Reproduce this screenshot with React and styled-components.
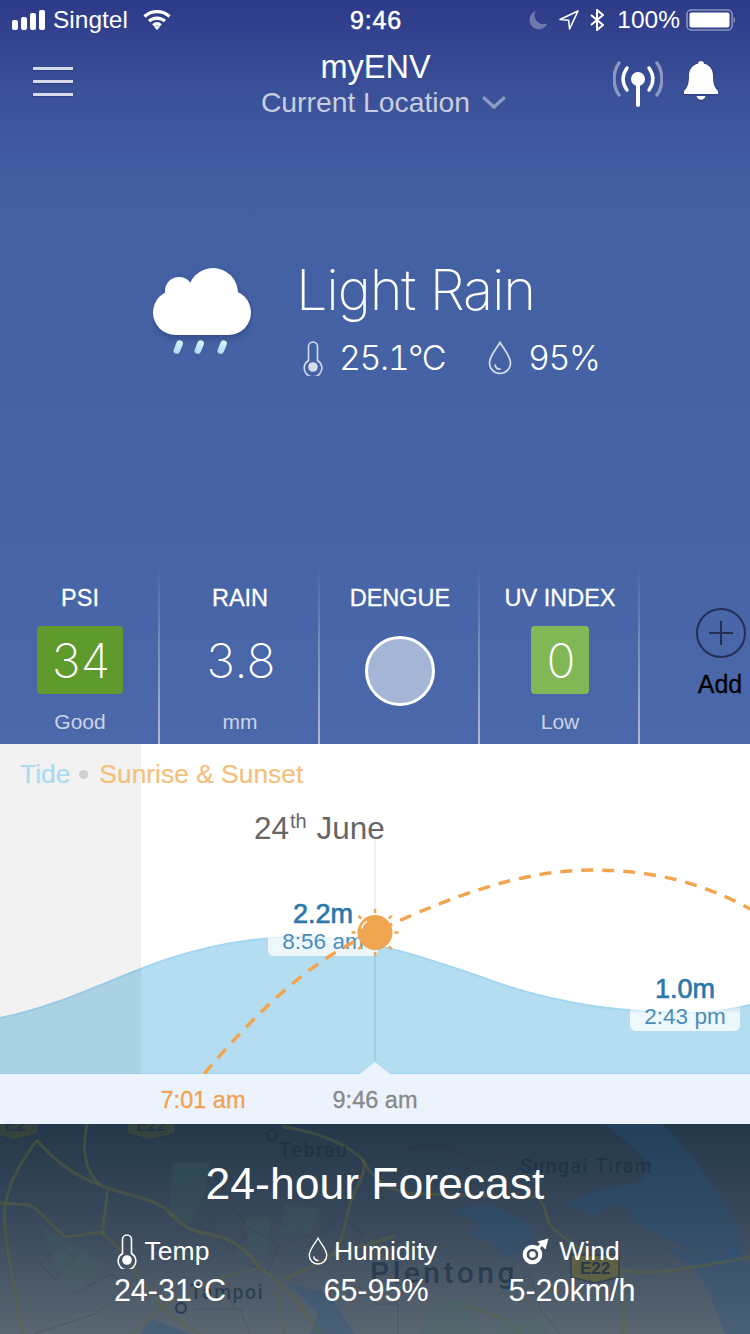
import React from 'react';
import styled, { createGlobalStyle } from 'styled-components';

const SANS = '"Liberation Sans", Arial, sans-serif';
const LIGHT = 'Inter, "Liberation Sans", sans-serif';

const GlobalStyle = createGlobalStyle`
  html, body {
    margin: 0;
    padding: 0;
    background: #fff;
  }
  #root {
    width: 750px;
    height: 1334px;
    overflow: hidden;
  }
`;

const Page = styled.div`
  width: 750px;
  height: 1334px;
  display: flex;
  flex-direction: column;
  font-family: ${SANS};
  overflow: hidden;
`;

/* ---------- blue top part ---------- */

const Top = styled.div`
  height: 744px;
  display: flex;
  flex-direction: column;
  background: linear-gradient(180deg, #2d3a88 0, #3a5098 90px, #4360a3 190px, #4563a5 500px, #4a68aa 744px);
  color: #fff;
`;

const StatusBar = styled.div`
  height: 40px;
  display: flex;
  align-items: center;
  padding: 0 15px 0 12px;
  font-size: 24.5px;
`;

const StatusGroup = styled.div`
  flex: 1;
  display: flex;
  align-items: center;
  justify-content: ${(p) => p.$end ? 'flex-end' : 'flex-start'};
  gap: ${(p) => p.$end ? '11px' : '8px'};
`;

const Clock = styled.div`
  margin-left: 5px;
  font-size: 25px;
  -webkit-text-stroke: 0.5px #fff;
  letter-spacing: 0.8px;
`;

const Percent = styled.span`
  margin: 0 -5px 0 2px;
`;

const Header = styled.div`
  height: 80px;
  display: grid;
  grid-template-columns: 1fr auto 1fr;
  align-items: start;
  padding: 0 32px 0 33px;
`;

const Burger = styled.div`
  width: 40px;
  display: flex;
  flex-direction: column;
  gap: 10px;
  margin-top: 27px;
`;

const BurgerLine = styled.div`
  height: 3px;
  background: #d5daea;
  box-shadow: 0 1px 1px rgba(20, 30, 90, 0.35);
`;

const HeaderCenter = styled.div`
  display: flex;
  flex-direction: column;
  align-items: center;
  margin-top: 9px;
`;

const AppName = styled.div`
  font-size: 32.5px;
  line-height: 37px;
`;

const LocationRow = styled.div`
  display: flex;
  align-items: center;
  gap: 12px;
  font-size: 28.3px;
  line-height: 32px;
  color: rgba(255, 255, 255, 0.72);
  margin-left: 16px;
`;

const HeaderIcons = styled.div`
  justify-self: end;
  display: flex;
  gap: 21px;
  margin-top: 21px;
`;

const Hero = styled.div`
  display: flex;
  gap: 43px;
  padding: 136px 0 0 153px;
`;

const CloudBox = styled.div`
  padding-top: 11px;
`;

const HeroText = styled.div`
  display: flex;
  flex-direction: column;
`;

const Condition = styled.div`
  font-family: ${LIGHT};
  font-weight: 250;
  font-size: 56px;
  line-height: 68px;
  letter-spacing: -1.2px;
`;

const HeroStats = styled.div`
  display: flex;
  align-items: center;
  padding: 14px 0 0 7px;
`;

const HeroValue = styled.div`
  font-family: ${LIGHT};
  font-weight: 300;
  font-size: 34px;
  line-height: 40px;
  letter-spacing: -1.5px;
  font-feature-settings: 'tnum';
  margin: 0 ${(p) => p.$after || 0}px 0 ${(p) => p.$before || 0}px;
`;

const Metrics = styled.div`
  margin-top: auto;
  height: 174px;
  display: flex;
`;

const Metric = styled.div`
  position: relative;
  flex: 0 0 160px;
  display: flex;
  flex-direction: column;
  align-items: center;
  padding-top: 14px;
  box-sizing: border-box;

  &::after {
    content: '';
    position: absolute;
    right: 0;
    top: 0;
    bottom: 0;
    width: 2px;
    background: linear-gradient(180deg, rgba(255, 255, 255, 0.02), rgba(255, 255, 255, 0.55));
    display: ${(p) => p.$last ? 'none' : 'block'};
  }
`;

const MetricTitle = styled.div`
  font-size: 23.5px;
  line-height: 28px;
  -webkit-text-stroke: 0.3px #fff;
`;

const ValueSlot = styled.div`
  height: 68px;
  margin-top: 14px;
  display: flex;
  align-items: center;
  justify-content: center;
`;

const ValueTile = styled.div`
  min-width: ${(p) => p.$wide ? '86px' : '58px'};
  height: 68px;
  border-radius: 4px;
  background: ${(p) => p.$color || 'transparent'};
  display: flex;
  align-items: center;
  justify-content: center;
  font-family: ${LIGHT};
  font-weight: 200;
  font-size: 48px;
  letter-spacing: -2px;
  font-feature-settings: 'tnum';
`;

const DengueDot = styled.div`
  width: 64px;
  height: 64px;
  margin-top: 24px;
  border-radius: 50%;
  border: 3px solid #fff;
  background: #a5b5d6;
`;

const MetricNote = styled.div`
  margin-top: 16px;
  font-size: 21px;
  line-height: 24px;
  color: rgba(255, 255, 255, 0.72);
`;

const AddCircle = styled.div`
  width: 50px;
  height: 50px;
  box-sizing: border-box;
  margin: 24px 0 0 2px;
  border: 2px solid #232f55;
  border-radius: 50%;
  display: flex;
  align-items: center;
  justify-content: center;
`;

const AddLabel = styled.div`
  margin-top: 12px;
  font-size: 25px;
  line-height: 28px;
  color: #000;
  -webkit-text-stroke: 0.3px #000;
`;

/* ---------- tide chart ---------- */

const Chart = styled.div`
  position: relative;
  height: 330px;
  background: #fff;
  overflow: hidden;
`;

const ChartDrawing = styled.svg`
  position: absolute;
  inset: 0;
`;

const PastShade = styled.div`
  position: absolute;
  left: 0;
  top: 0;
  bottom: 0;
  width: 141px;
  background: rgba(0, 0, 0, 0.05);
`;

const Legend = styled.div`
  position: relative;
  display: flex;
  align-items: center;
  padding: 15px 0 0 20px;
  font-size: 26.4px;
  line-height: 30px;
  -webkit-text-stroke: 0.2px currentColor;
`;

const LegendItem = styled.span`
  color: ${(p) => p.$color};
`;

const LegendDot = styled.span`
  width: 9px;
  height: 9px;
  margin: 0 11px 0 9px;
  border-radius: 50%;
  background: #d0d0d0;
`;

const DateLabel = styled.div`
  position: absolute;
  left: 254px;
  top: 64px;
  font-size: 31.5px;
  line-height: 40px;
  color: #666;
`;

const DateSup = styled.sup`
  font-size: 20px;
  line-height: 0;
  vertical-align: 11px;
  margin: 0 1px;
`;

const TideMark = styled.div`
  position: absolute;
  left: ${(p) => p.$left}px;
  top: ${(p) => p.$top}px;
  width: 110px;
  display: flex;
  flex-direction: column;
  align-items: center;
`;

const TideHeight = styled.div`
  font-size: 27px;
  line-height: 27px;
  -webkit-text-stroke: 0.7px #2d78a8;
  color: #2d78a8;
`;

const TideTime = styled.div`
  width: 100%;
  height: 28px;
  box-sizing: border-box;
  padding-top: 1px;
  text-align: center;
  font-size: 22.5px;
  line-height: 25px;
  color: #4c8db6;
  background: linear-gradient(180deg, rgba(255, 255, 255, 0), rgba(255, 255, 255, 0.78) 40%);
  border-radius: 0 0 6px 6px;
`;

const TimeBar = styled.div`
  position: relative;
  height: 50px;
  background: #ecf3fd;
  font-size: 23.5px;
  -webkit-text-stroke: 0.3px currentColor;
`;

const TimeMark = styled.div`
  position: absolute;
  left: ${(p) => p.$center}px;
  top: 11px;
  line-height: 30px;
  transform: translateX(-50%);
  color: ${(p) => p.$color};
`;

/* ---------- forecast ---------- */

const Forecast = styled.div`
  position: relative;
  flex: 1;
  background: linear-gradient(180deg, #23384a 0, #3a4a5c 50%, #5a6672 100%);
  color: #fff;
  overflow: hidden;
`;

const MapDrawing = styled.svg`
  position: absolute;
  inset: 0;
`;

const ForecastBody = styled.div`
  position: relative;
  display: flex;
  flex-direction: column;
`;

const ForecastTitle = styled.div`
  margin-top: 34px;
  text-align: center;
  font-size: 44.5px;
  line-height: 52px;
`;

const ForecastGrid = styled.div`
  display: grid;
  grid-template-columns: 206px 206px 186px;
  padding: 25px 0 0 67px;
`;

const ForecastCell = styled.div`
  display: flex;
  flex-direction: column;
  align-items: center;
`;

const CellLabel = styled.div`
  display: flex;
  align-items: center;
  gap: ${(p) => p.$gap}px;
  height: 32px;
  font-size: 26.5px;
  margin-left: ${(p) => p.$shift || 0}px;
`;

const CellValue = styled.div`
  margin-top: 6px;
  font-size: 30.5px;
  line-height: 34px;
`;

/* ---------- icons ---------- */

const SignalIcon = () => (
  <svg width="33" height="22" viewBox="0 0 33 22">
    <rect x="0" y="11" width="6" height="10" rx="2" fill="#fff" />
    <rect x="9" y="8" width="6" height="13" rx="2" fill="#fff" />
    <rect x="18" y="4" width="6" height="17" rx="2" fill="#fff" />
    <rect x="27" y="1" width="6" height="20" rx="2" fill="#fff" />
  </svg>
);

const WifiIcon = () => (
  <svg width="28" height="22" viewBox="0 0 28 22" fill="none" stroke="#fff" strokeWidth="3.2" style={{ marginLeft: 7 }}>
    <path d="M1.5 7.5C8.5 1 19.5 1 26.5 7.5" />
    <path d="M6 12.2C10.5 8 17.5 8 22 12.2" />
    <path d="M10.2 16.4C12.5 14.4 15.5 14.4 17.8 16.4" />
    <path d="M14 21l-3-3.2c1.8-1.2 4.2-1.2 6 0z" fill="#fff" stroke="none" />
  </svg>
);

const MoonIcon = () => (
  <svg width="19" height="20" viewBox="0 0 19 20">
    <path d="M7 1C3 2.300 .5 5.800 .5 10c0 5.200 4.200 9.200 9.300 9.200 4 0 7.400-2.400 8.700-6-1.200.6-2.500.9-3.900.9C9.400 14.100 5.600 10.300 5.600 5.300 5.600 3.800 6.100 2.300 7 1z" fill="rgba(255,255,255,0.3)" />
  </svg>
);

const ArrowIcon = () => (
  <svg width="20" height="20" viewBox="0 0 20 20" fill="none" stroke="#fff" strokeWidth="1.6" strokeLinejoin="round">
    <path d="M19 1L1 9.500l8.700.8.900 8.700z" />
  </svg>
);

const BluetoothIcon = () => (
  <svg width="14" height="22" viewBox="0 0 14 22" fill="none" stroke="#fff" strokeWidth="2">
    <path d="M1 6l12 10-6 5V1l6 5L1 16" />
  </svg>
);

const BatteryIcon = () => (
  <svg width="49" height="22" viewBox="0 0 49 22">
    <rect x="1" y="1" width="45" height="20" rx="4" fill="none" stroke="rgba(255,255,255,0.45)" strokeWidth="1.5" />
    <rect x="3.500" y="3.500" width="40" height="15" rx="2" fill="#fff" />
    <path d="M47.500 8c1 .3 1.500 1.500 1.500 3s-.5 2.700-1.500 3z" fill="rgba(255,255,255,0.45)" />
  </svg>
);

const ChevronIcon = () => (
  <svg width="24" height="13" viewBox="0 0 24 13" fill="none" stroke="rgba(255,255,255,0.42)" strokeWidth="3.400">
    <path d="M1.200 1.200L12 11 22.800 1.200" />
  </svg>
);

const AntennaIcon = () => (
  <svg width="50" height="46" viewBox="0 0 50 46" fill="none" strokeLinecap="round">
    <path d="M6 2C-.5 11-.5 25 6 34" stroke="rgba(255,255,255,0.42)" strokeWidth="3.400" />
    <path d="M44 2c6.500 9 6.500 23 0 32" stroke="rgba(255,255,255,0.42)" strokeWidth="3.400" />
    <path d="M14 7c-5 7-5 15 0 22" stroke="#fff" strokeWidth="3.400" />
    <path d="M36 7c5 7 5 15 0 22" stroke="#fff" strokeWidth="3.400" />
    <circle cx="25" cy="18" r="7" fill="#fff" />
    <path d="M25 20v24" stroke="#fff" strokeWidth="4" />
  </svg>
);

const BellIcon = () => (
  <svg width="34" height="41" viewBox="0 0 34 41" style={{ filter: 'drop-shadow(0 1px 1px rgba(20,30,90,0.4))' }}>
    <path d="M17 0c1.600 0 2.900 1.100 3 2.700 5.500 1.300 9 5.500 9 12 0 8 1.500 12 5 15.300V33H0v-3c3.500-3.300 5-7.300 5-15.300 0-6.500 3.500-10.700 9-12C14.100 1.100 15.400 0 17 0z" fill="#fff" />
    <path d="M12.500 35h9c-.5 2.400-2.300 3.800-4.500 3.800S13 37.400 12.500 35z" fill="#fff" />
  </svg>
);

const CloudIcon = () => (
  <svg width="100" height="94" viewBox="0 0 100 94">
    <defs>
      <linearGradient id="dropFill" x1="0" y1="0" x2="0" y2="1">
        <stop offset="0" stopColor="#dff5fd" />
        <stop offset="1" stopColor="#a8def3" />
      </linearGradient>
    </defs>
    <g style={{ filter: 'drop-shadow(0 3px 3px rgba(25,35,90,0.35))' }}>
      <circle cx="60" cy="26" r="25" fill="#fff" />
      <circle cx="26" cy="24" r="14" fill="#fff" />
      <rect x="0" y="23" width="98" height="45" rx="22.500" fill="#fff" />
      <rect x="20" y="20" width="60" height="20" fill="#fff" />
    </g>
    <g fill="url(#dropFill)">
      <rect x="22" y="73" width="6.500" height="14" rx="3.200" transform="rotate(22 25 80)" />
      <rect x="43" y="73" width="6.500" height="14" rx="3.200" transform="rotate(22 46 80)" />
      <rect x="66" y="73" width="6.500" height="14" rx="3.200" transform="rotate(22 69 80)" />
    </g>
  </svg>
);

const ThermoIcon = ({ color = '#fff', dot = '#fff' }) => (
  <svg width="20" height="35" viewBox="0 0 20 35" fill="none" stroke={color} strokeWidth="1.600">
    <path d="M5.500 19.500V5.500a4.500 4.500 0 0 1 9 0v14a8.800 8.800 0 1 1-9 0z" />
    <circle cx="10" cy="26" r="4.800" fill={dot} stroke="none" />
  </svg>
);

const DropIcon = ({ color = '#fff', size = 24 }) => (
  <svg width={size} height={size * 1.417} viewBox="0 0 24 34" fill="none" stroke={color} strokeWidth="1.700">
    <path d="M12 1.500C8 8.500 1.500 15 1.500 22a10.500 10.500 0 0 0 21 0C22.500 15 16 8.500 12 1.500z" />
    <path d="M7 24c.6 2.600 2.600 4.200 5 4.200" strokeLinecap="round" />
  </svg>
);

const WindIcon = () => (
  <svg width="27" height="27" viewBox="0 0 27 27">
    <circle cx="10.500" cy="16.500" r="7.800" fill="none" stroke="#fff" strokeWidth="4" />
    <circle cx="10.500" cy="16.500" r="3.200" fill="#fff" />
    <path d="M15.500 10.500l6-6" stroke="#fff" strokeWidth="3" />
    <path d="M15.500 3.500L26.500.5 23.500 11.500z" fill="#fff" />
  </svg>
);

const tideCurve = 'M0 274C60 262 110 235 165 216 210 201 255 193 300 193 370 193 430 215 510 243 570 262 630 269 690 269 715 269 735 265 750 261';

const TideArea = () => (
  <ChartDrawing width="750" height="330" viewBox="0 0 750 330">
    <path d={`${tideCurve}V330H0Z`} fill="#b5ddf2" />
    <path d={tideCurve} fill="none" stroke="#a3d6f0" strokeWidth="2" />
    <path d="M0 329.500H750" stroke="#a3d6f0" strokeWidth="1" />
    <path d="M375 96V190" stroke="#eef3f8" strokeWidth="2" />
    <path d="M375 194V318" stroke="#a2cde3" strokeWidth="2" />
    <path d="M360 330L375 318 390 330Z" fill="#ecf3fd" />
  </ChartDrawing>
);

const sunRays = [0, 45, 90, 135, 180, 225, 270, 315];

const SunLayer = () => (
  <ChartDrawing width="750" height="330" viewBox="0 0 750 330">
    <path
      d="M204 330C255 270 310 215 375 188 455 150 525 126 592 126 655 126 705 140 750 165"
      fill="none"
      stroke="#f2a54e"
      strokeWidth="3.500"
      strokeDasharray="12 9"
    />
    <g stroke="#f0a650" strokeWidth="2.500">
      {sunRays.map((a) => (
        <path key={a} d="M375 165V169" transform={`rotate(${a} 375 188.500)`} />
      ))}
    </g>
    <circle cx="375" cy="188.500" r="17.500" fill="#f0a650" />
    <path d="M362 184c.6-2.800 2.200-5 4.800-6.300" fill="none" stroke="#fff" strokeWidth="1.400" strokeLinecap="round" />
  </ChartDrawing>
);

const RoadLine = ({ d, w = 3 }) => <path d={d} fill="none" stroke="rgba(98,100,54,0.42)" strokeWidth={w} />;

const Shield = ({ x, y, w, label, strong }) => (
  <g>
    <path
      d={`M${x} ${y}h${w}v${22}l-${w / 2} 6-${w / 2}-6z`}
      fill={strong ? 'rgba(106,104,50,0.62)' : 'rgba(70,76,50,0.5)'}
      stroke="rgba(30,50,80,0.6)"
      strokeWidth="1.500"
    />
    <text x={x + w / 2} y={y + 19} textAnchor="middle" fontFamily={SANS} fontWeight="700" fontSize="17" fill="rgba(30,50,75,0.85)">
      {label}
    </text>
  </g>
);

const mapPlace = { fontFamily: 'Roboto, sans-serif', fontWeight: 500, letterSpacing: 1.500, fill: 'rgba(24,44,66,0.62)' };

const MapLayer = () => (
  <MapDrawing width="750" height="210" viewBox="0 0 750 210">
    <g fill="rgba(36,84,128,0.3)">
      <path d="M605 0H662L690 30 712 60 735 95 745 125 725 140 700 130 672 118 640 102 620 80 590 92 568 78 600 65 640 58 650 40 632 22Z" />
      <path d="M660 120L700 150 712 175 725 210H750V140L735 120 720 135Z" />
      <path d="M455 85L490 80 530 98 535 120 505 135 490 118 468 112 478 100Z" />
      <path d="M290 160L330 170 345 195 355 210H310L318 190Z" />
      <path d="M150 195L180 205 190 210H140Z" />
    </g>
    <g fill="rgba(62,112,92,0.18)">
      <path d="M172 38H210L205 70 190 100 170 92Z" />
      <path d="M245 95H270L268 130 248 125Z" />
      <path d="M285 80L320 85 310 110 280 108Z" />
      <path d="M40 100L65 115 100 140 80 165 60 150Z" />
      <path d="M430 180L465 175 480 210H420Z" />
      <path d="M500 195H540L548 210H495Z" />
      <path d="M370 115L392 125 395 140 375 145Z" />
    </g>
    <g fill="none" stroke="rgba(20,30,40,0.16)" strokeWidth="1">
      <path d="M40 140L60 122 75 135 55 155ZM75 170L110 150 130 160 95 190 33 210" />
      <path d="M230 80L250 105 232 128 210 100ZM250 105L278 120 268 148 248 140" />
      <path d="M290 120L300 105 318 118 340 90 362 110 345 135" />
      <path d="M195 185H240L250 210M220 160L235 185" />
      <path d="M408 24L440 20 480 40 500 35M500 170L530 150 540 185 560 210" />
      <path d="M375 180H398V210M375 125L400 130 430 120" />
    </g>
    <RoadLine d="M37 16C28 30 10 50 5 83 2 110 16 170 23 210" />
    <RoadLine d="M37 16C55 38 75 52 100 61 125 72 150 72 167 86 180 100 190 108 213 111 235 115 250 130 260 144 272 152 290 165 320 210" w={3.500} />
    <RoadLine d="M88-4C85 10 78 40 100 61" />
    <RoadLine d="M0 79L30 81C45 90 55 108 67 113L100 108C115 118 125 130 133 143 145 165 165 192 200 210" />
    <RoadLine d="M107 66C108 80 102 95 103 110" />
    <RoadLine d="M133 210C145 195 175 172 195 165 215 155 240 148 260 144" w={2} />
    <RoadLine d="M283 156C300 148 318 142 333 130 345 115 345 95 350 80 356 62 368 48 363 36 350 22 320 8 283 3" />
    <RoadLine d="M363 36C370 50 385 65 408 69 450 72 500 72 538 73 548 85 545 95 552 103 565 118 600 135 622 146 640 150 655 148 675 146 700 142 725 138 750 133" />
    <RoadLine d="M333 130L375 118 395 112" />
    <RoadLine d="M622 146C626 170 624 190 623 210" w={3.500} />
    <RoadLine d="M275 165L285 210M520 210L505 195 460 180" w={2} />
    <Shield x={-8} y={-12} w={46} label="E2" />
    <Shield x={127} y={-12} w={48} label="E22" />
    <Shield x={571} y={131} w={48} label="E22" strong />
    <circle cx="272" cy="11" r="5" fill="none" stroke="rgba(24,44,66,0.7)" strokeWidth="2" />
    <circle cx="181" cy="184" r="5" fill="none" stroke="rgba(24,44,66,0.7)" strokeWidth="2" />
    <text x="279" y="33" fontSize="19.5" {...mapPlace}>Tebrau</text>
    <text x="520" y="49" fontSize="19.5" {...mapPlace}>Sungai Tiram</text>
    <text x="190" y="175" fontSize="19.5" {...mapPlace}>Tampoi</text>
    <text x="370" y="159" fontSize="30" {...mapPlace} letterSpacing="3.500">Plentong</text>
  </MapDrawing>
);

const App = () => (
  <Page>
    <GlobalStyle />
    <Top>
      <StatusBar>
        <StatusGroup>
          <SignalIcon />
          <span>Singtel</span>
          <WifiIcon />
        </StatusGroup>
        <Clock>9:46</Clock>
        <StatusGroup $end>
          <MoonIcon />
          <ArrowIcon />
          <BluetoothIcon />
          <Percent>100%</Percent>
          <BatteryIcon />
        </StatusGroup>
      </StatusBar>

      <Header>
        <Burger>
          <BurgerLine />
          <BurgerLine />
          <BurgerLine />
        </Burger>
        <HeaderCenter>
          <AppName>myENV</AppName>
          <LocationRow>
            Current Location
            <ChevronIcon />
          </LocationRow>
        </HeaderCenter>
        <HeaderIcons>
          <AntennaIcon />
          <BellIcon />
        </HeaderIcons>
      </Header>

      <Hero>
        <CloudBox>
          <CloudIcon />
        </CloudBox>
        <HeroText>
          <Condition>Light Rain</Condition>
          <HeroStats>
            <ThermoIcon color="#d5dcec" dot="#d5dcec" />
            <HeroValue $before={16} $after={43}>25.1°C</HeroValue>
            <DropIcon color="#d5dcec" />
            <HeroValue $before={16}>95%</HeroValue>
          </HeroStats>
        </HeroText>
      </Hero>

      <Metrics>
        <Metric>
          <MetricTitle>PSI</MetricTitle>
          <ValueSlot>
            <ValueTile $wide $color="#5f9a2d">34</ValueTile>
          </ValueSlot>
          <MetricNote>Good</MetricNote>
        </Metric>
        <Metric>
          <MetricTitle>RAIN</MetricTitle>
          <ValueSlot>
            <ValueTile $wide>3.8</ValueTile>
          </ValueSlot>
          <MetricNote>mm</MetricNote>
        </Metric>
        <Metric>
          <MetricTitle>DENGUE</MetricTitle>
          <DengueDot />
        </Metric>
        <Metric>
          <MetricTitle>UV INDEX</MetricTitle>
          <ValueSlot>
            <ValueTile $color="#82b755">0</ValueTile>
          </ValueSlot>
          <MetricNote>Low</MetricNote>
        </Metric>
        <Metric $last>
          <AddCircle>
            <svg width="26" height="26" viewBox="0 0 26 26" stroke="#232f55" strokeWidth="2">
              <path d="M13 1v24M1 13h24" />
            </svg>
          </AddCircle>
          <AddLabel>Add</AddLabel>
        </Metric>
      </Metrics>
    </Top>

    <Chart>
      <TideArea />
      <PastShade />
      <Legend>
        <LegendItem $color="#a8daf4">Tide</LegendItem>
        <LegendDot />
        <LegendItem $color="#f5c07c">Sunrise &amp; Sunset</LegendItem>
      </Legend>
      <DateLabel>
        24<DateSup>th</DateSup> June
      </DateLabel>
      <TideMark $left={268} $top={157}>
        <TideHeight>2.2m</TideHeight>
        <TideTime>8:56 am</TideTime>
      </TideMark>
      <TideMark $left={630} $top={232}>
        <TideHeight>1.0m</TideHeight>
        <TideTime>2:43 pm</TideTime>
      </TideMark>
      <SunLayer />
    </Chart>

    <TimeBar>
      <TimeMark $center={203} $color="#f2a14c">7:01 am</TimeMark>
      <TimeMark $center={375} $color="#888">9:46 am</TimeMark>
    </TimeBar>

    <Forecast>
      <MapLayer />
      <ForecastBody>
        <ForecastTitle>24-hour Forecast</ForecastTitle>
        <ForecastGrid>
          <ForecastCell>
            <CellLabel $gap={8} $shift={-14}>
              <ThermoIcon />
              Temp
            </CellLabel>
            <CellValue>24-31°C</CellValue>
          </ForecastCell>
          <ForecastCell>
            <CellLabel $gap={6} $shift={-7}>
              <DropIcon size={20} />
              Humidity
            </CellLabel>
            <CellValue>65-95%</CellValue>
          </ForecastCell>
          <ForecastCell>
            <CellLabel $gap={10} $shift={-2}>
              <WindIcon />
              Wind
            </CellLabel>
            <CellValue>5-20km/h</CellValue>
          </ForecastCell>
        </ForecastGrid>
      </ForecastBody>
    </Forecast>
  </Page>
);

export default App;
